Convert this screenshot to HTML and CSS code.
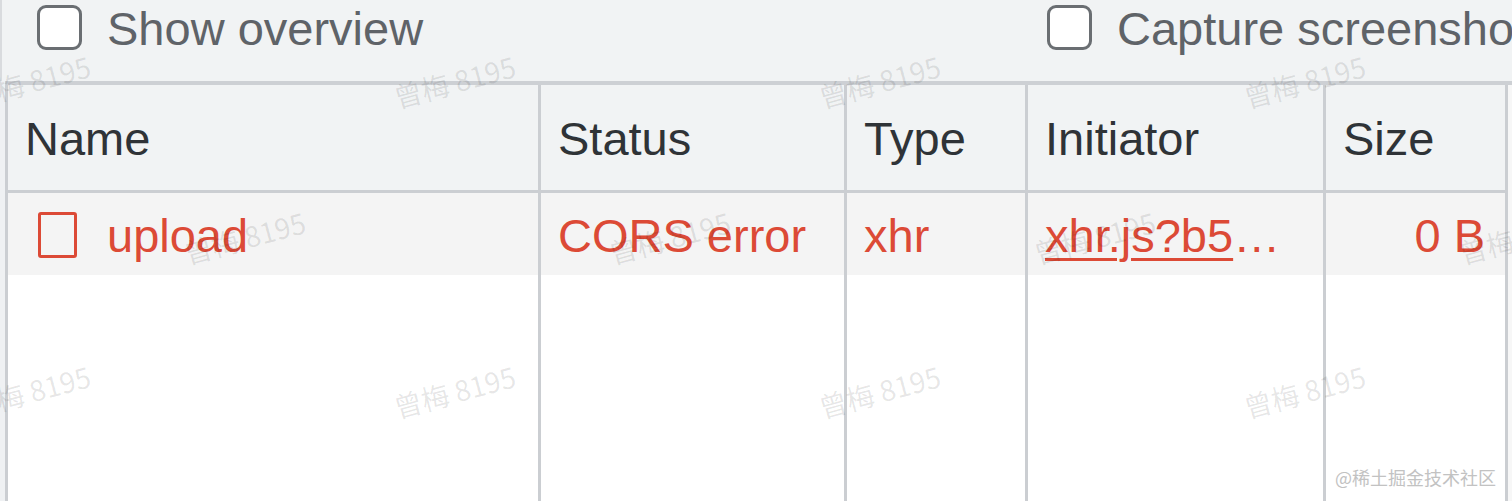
FILE: index.html
```html
<!DOCTYPE html>
<html lang="en">
<head>
<meta charset="utf-8">
<title>Network</title>
<link rel="stylesheet" href="styles.css">
</head>
<body>
<div class="page">
  <div class="toolbar">
    <label class="opt opt-first"><span class="box"></span><span class="opt-text">Show overview</span></label>
    <label class="opt"><span class="box"></span><span class="opt-text">Capture screenshots</span></label>
  </div>
  <div class="table">
    <div class="col col-name">
      <div class="th">Name</div>
      <div class="td"><span class="doc-icon"></span><span class="err name-text">upload</span></div>
      <div class="fill"></div>
    </div>
    <div class="col col-status">
      <div class="th">Status</div>
      <div class="td"><span class="err">CORS error</span></div>
      <div class="fill"></div>
    </div>
    <div class="col col-type">
      <div class="th">Type</div>
      <div class="td"><span class="err">xhr</span></div>
      <div class="fill"></div>
    </div>
    <div class="col col-init">
      <div class="th">Initiator</div>
      <div class="td"><span class="err link">xhr.js?b5</span><span class="err">…</span></div>
      <div class="fill"></div>
    </div>
    <div class="col col-size">
      <div class="th">Size</div>
      <div class="td td-right"><span class="err">0 B</span></div>
      <div class="fill"></div>
    </div>
    <div class="col-rest"></div>
  </div>

  <div class="wm" style="left:-33px;top:63px">曾梅 8195</div>
  <div class="wm" style="left:392px;top:63px">曾梅 8195</div>
  <div class="wm" style="left:817px;top:63px">曾梅 8195</div>
  <div class="wm" style="left:1242px;top:63px">曾梅 8195</div>
  <div class="wm" style="left:182px;top:219px">曾梅 8195</div>
  <div class="wm" style="left:607px;top:219px">曾梅 8195</div>
  <div class="wm" style="left:1032px;top:219px">曾梅 8195</div>
  <div class="wm" style="left:1457px;top:219px">曾梅 8195</div>
  <div class="wm" style="left:-33px;top:373px">曾梅 8195</div>
  <div class="wm" style="left:392px;top:373px">曾梅 8195</div>
  <div class="wm" style="left:817px;top:373px">曾梅 8195</div>
  <div class="wm" style="left:1242px;top:373px">曾梅 8195</div>

  <div class="brand">@稀土掘金技术社区</div>
</div>
</body>
</html>
```

FILE: styles.css
```css
* { box-sizing: border-box; }
html, body { margin: 0; padding: 0; }
body {
  width: 1512px;
  height: 501px;
  overflow: hidden;
  background: #eff1f3;
  font-family: "Liberation Sans", Arial, Helvetica, sans-serif;
}
.page {
  position: relative;
  width: 1512px;
  height: 501px;
  display: flex;
  flex-direction: column;
  overflow: hidden;
}
.toolbar {
  height: 81px;
  flex: none;
  background: #f1f3f4;
  border-left: 2px solid #d9dbde;
  display: grid;
  grid-template-columns: 1010px auto;
  padding-left: 35px;
  padding-top: 5px;
  white-space: nowrap;
  overflow: hidden;
}
.opt {
  display: flex;
  align-items: center;
  height: 45px;
  gap: 25px;
  color: #5f6368;
  font-size: 47px;
}
.box {
  width: 45px;
  height: 45px;
  flex: none;
  border: 3px solid #6a6e72;
  border-radius: 9px;
  background: #ffffff;
}
.opt-text { line-height: 45px; position: relative; top: 1px; }
.table {
  flex: 1;
  display: flex;
  margin-left: 5px;
  border-left: 3px solid #cbced2;
  border-top: 4px solid #cdd0d4;
  background: #ffffff;
}
.col {
  display: flex;
  flex-direction: column;
  border-right: 3px solid #cbced2;
  flex: none;
}
.col-name { width: 533px; }
.col-status { width: 306px; }
.col-type { width: 181px; }
.col-init { width: 298px; }
.col-size { width: 182px; }
.col-rest { flex: 1; background: #f7f7f7; }
.th {
  height: 108px;
  border-bottom: 3px solid #cbced2;
  background: #f1f3f4;
  color: #2f3337;
  font-size: 47px;
  display: flex;
  align-items: center;
  padding-left: 17px;
  padding-top: 2px;
}
.td {
  height: 82px;
  background: #f4f4f4;
  font-size: 47px;
  display: flex;
  align-items: center;
  padding-left: 17px;
  padding-top: 2px;
  white-space: nowrap;
}
.td-right { justify-content: flex-end; padding-left: 0; padding-right: 20px; }
.fill { flex: 1; background: #ffffff; }
.err { color: #dc4a36; }
.link {
  text-decoration: underline;
  text-decoration-thickness: 3px;
  text-underline-offset: 6px;
}
.doc-icon {
  width: 39px;
  height: 46px;
  border: 3px solid #dc4a36;
  border-radius: 3px;
  margin-left: 13px;
  margin-right: 30px;
  flex: none;
}
.wm {
  position: absolute;
  width: 140px;
  height: 32px;
  line-height: 32px;
  font-size: 28px;
  font-family: "Noto Sans CJK SC", "Liberation Sans", sans-serif;
  color: rgba(0, 0, 0, 0.1);
  transform: rotate(-15deg);
  white-space: nowrap;
  pointer-events: none;
}
.brand {
  position: absolute;
  left: 1335px;
  top: 464px;
  font-size: 18px;
  line-height: 26px;
  font-family: "Noto Sans CJK SC", "Liberation Sans", sans-serif;
  color: #c2c2c2;
  white-space: nowrap;
}
```
